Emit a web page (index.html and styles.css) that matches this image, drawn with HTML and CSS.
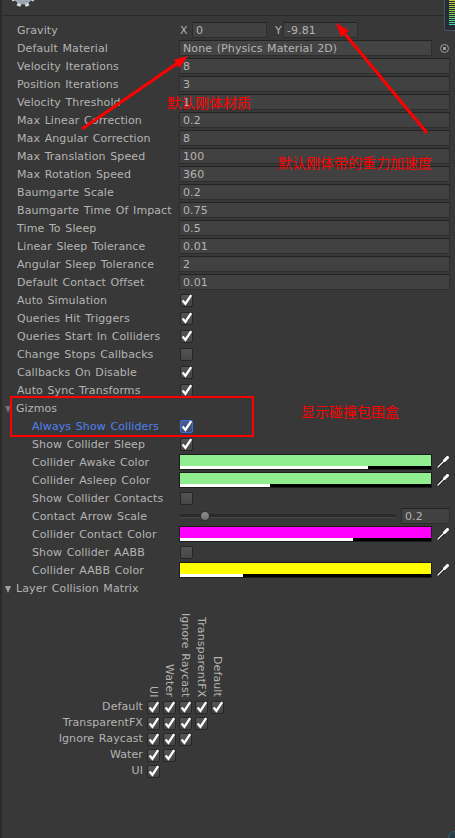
FILE: index.html
```html
<!DOCTYPE html>
<html>
<head>
<meta charset="utf-8">
<title>Physics 2D Settings</title>
<link rel="stylesheet" href="styles.css">
</head>
<body>
<div class="page">
  <div class="header">
    <svg class="gear" width="24" height="7" viewBox="0 17 24 7">
      <defs>
        <linearGradient id="gg" x1="0" y1="0" x2="0" y2="1">
          <stop offset="0" stop-color="#f4f6f9"/>
          <stop offset="1" stop-color="#8a94a4"/>
        </linearGradient>
      </defs>
      <g fill="url(#gg)">
        <circle cx="12" cy="12" r="9.5"/>
        <rect x="10" y="0" width="4" height="5" transform="rotate(22.5 12 12)"/>
        <rect x="10" y="0" width="4" height="5" transform="rotate(67.5 12 12)"/>
        <rect x="10" y="0" width="4" height="5" transform="rotate(112.5 12 12)"/>
        <rect x="10" y="0" width="4" height="5" transform="rotate(157.5 12 12)"/>
        <rect x="10" y="0" width="4" height="5" transform="rotate(202.5 12 12)"/>
        <rect x="10" y="0" width="4" height="5" transform="rotate(247.5 12 12)"/>
        <rect x="10" y="0" width="4" height="5" transform="rotate(292.5 12 12)"/>
        <rect x="10" y="0" width="4" height="5" transform="rotate(337.5 12 12)"/>
      </g>
    </svg>
  </div>
  <div class="meter"></div>
  <div class="corner"></div>

  <div class="props">
    <div class="row"><span class="label">Gravity</span>
      <div class="val"><span class="axis">X</span><span class="field w75">0</span><span class="axis ay">Y</span><span class="field w75">-9.81</span></div></div>
    <div class="row"><span class="label">Default Material</span>
      <div class="val"><span class="field obj">None (Physics Material 2D)</span><span class="picker"></span></div></div>
    <div class="row"><span class="label">Velocity Iterations</span><div class="val"><span class="field">8</span></div></div>
    <div class="row"><span class="label">Position Iterations</span><div class="val"><span class="field">3</span></div></div>
    <div class="row"><span class="label">Velocity Threshold</span><div class="val"><span class="field">1</span></div></div>
    <div class="row"><span class="label">Max Linear Correction</span><div class="val"><span class="field">0.2</span></div></div>
    <div class="row"><span class="label">Max Angular Correction</span><div class="val"><span class="field">8</span></div></div>
    <div class="row"><span class="label">Max Translation Speed</span><div class="val"><span class="field">100</span></div></div>
    <div class="row"><span class="label">Max Rotation Speed</span><div class="val"><span class="field">360</span></div></div>
    <div class="row"><span class="label">Baumgarte Scale</span><div class="val"><span class="field">0.2</span></div></div>
    <div class="row"><span class="label">Baumgarte Time Of Impact</span><div class="val"><span class="field">0.75</span></div></div>
    <div class="row"><span class="label">Time To Sleep</span><div class="val"><span class="field">0.5</span></div></div>
    <div class="row"><span class="label">Linear Sleep Tolerance</span><div class="val"><span class="field">0.01</span></div></div>
    <div class="row"><span class="label">Angular Sleep Tolerance</span><div class="val"><span class="field">2</span></div></div>
    <div class="row"><span class="label">Default Contact Offset</span><div class="val"><span class="field">0.01</span></div></div>

    <div class="row"><span class="label">Auto Simulation</span><div class="val"><span class="cb"><svg viewBox="0 0 13 13"><path d="M2.6 6.6 L5.4 9.8 L11.2 1.2"/></svg></span></div></div>
    <div class="row"><span class="label">Queries Hit Triggers</span><div class="val"><span class="cb"><svg viewBox="0 0 13 13"><path d="M2.6 6.6 L5.4 9.8 L11.2 1.2"/></svg></span></div></div>
    <div class="row"><span class="label">Queries Start In Colliders</span><div class="val"><span class="cb"><svg viewBox="0 0 13 13"><path d="M2.6 6.6 L5.4 9.8 L11.2 1.2"/></svg></span></div></div>
    <div class="row"><span class="label">Change Stops Callbacks</span><div class="val"><span class="cb"></span></div></div>
    <div class="row"><span class="label">Callbacks On Disable</span><div class="val"><span class="cb"><svg viewBox="0 0 13 13"><path d="M2.6 6.6 L5.4 9.8 L11.2 1.2"/></svg></span></div></div>
    <div class="row"><span class="label">Auto Sync Transforms</span><div class="val"><span class="cb"><svg viewBox="0 0 13 13"><path d="M2.6 6.6 L5.4 9.8 L11.2 1.2"/></svg></span></div></div>

    <div class="row"><span class="label fold"><i class="tri dim"></i>Gizmos</span></div>
    <div class="row"><span class="label in focus">Always Show Colliders</span><div class="val"><span class="cb cbf"><svg viewBox="0 0 13 13"><path d="M2.6 6.6 L5.4 9.8 L11.2 1.2"/></svg></span></div></div>
    <div class="row"><span class="label in">Show Collider Sleep</span><div class="val"><span class="cb"><svg viewBox="0 0 13 13"><path d="M2.6 6.6 L5.4 9.8 L11.2 1.2"/></svg></span></div></div>
    <div class="row"><span class="label in">Collider Awake Color</span>
      <div class="val"><span class="color"><span class="fill green"></span><span class="alpha"><i style="width:75%"></i></span></span>
        <svg class="dropper" viewBox="0 0 12 12"><path class="dr-o" d="M1 11 L8 4"/><path class="dr-i" d="M1 11 L8 4"/><path class="dr-h" d="M7.5 4.5 L10.5 1.5"/></svg></div></div>
    <div class="row"><span class="label in">Collider Asleep Color</span>
      <div class="val"><span class="color"><span class="fill green"></span><span class="alpha"><i style="width:36%"></i></span></span>
        <svg class="dropper" viewBox="0 0 12 12"><path class="dr-o" d="M1 11 L8 4"/><path class="dr-i" d="M1 11 L8 4"/><path class="dr-h" d="M7.5 4.5 L10.5 1.5"/></svg></div></div>
    <div class="row"><span class="label in">Show Collider Contacts</span><div class="val"><span class="cb"></span></div></div>
    <div class="row"><span class="label in">Contact Arrow Scale</span>
      <div class="val"><span class="slider"><span class="track"></span><span class="thumb"></span></span><span class="field num">0.2</span></div></div>
    <div class="row"><span class="label in">Collider Contact Color</span>
      <div class="val"><span class="color"><span class="fill magenta"></span><span class="alpha"><i style="width:69%"></i></span></span>
        <svg class="dropper" viewBox="0 0 12 12"><path class="dr-o" d="M1 11 L8 4"/><path class="dr-i" d="M1 11 L8 4"/><path class="dr-h" d="M7.5 4.5 L10.5 1.5"/></svg></div></div>
    <div class="row"><span class="label in">Show Collider AABB</span><div class="val"><span class="cb"></span></div></div>
    <div class="row"><span class="label in">Collider AABB Color</span>
      <div class="val"><span class="color"><span class="fill yellow"></span><span class="alpha"><i style="width:25%"></i></span></span>
        <svg class="dropper" viewBox="0 0 12 12"><path class="dr-o" d="M1 11 L8 4"/><path class="dr-i" d="M1 11 L8 4"/><path class="dr-h" d="M7.5 4.5 L10.5 1.5"/></svg></div></div>

    <div class="row"><span class="label fold"><i class="tri"></i>Layer Collision Matrix</span></div>

    <div class="matrix">
      <div class="mhead">
        <span class="mspacer"></span>
        <span class="mcol"><span class="vt">UI</span></span>
        <span class="mcol"><span class="vt">Water</span></span>
        <span class="mcol"><span class="vt">Ignore Raycast</span></span>
        <span class="mcol"><span class="vt">TransparentFX</span></span>
        <span class="mcol"><span class="vt">Default</span></span>
      </div>
      <div class="mrow"><span class="mlabel">Default</span>
        <span class="cb"><svg viewBox="0 0 13 13"><path d="M2.6 6.6 L5.4 9.8 L11.2 1.2"/></svg></span>
        <span class="cb"><svg viewBox="0 0 13 13"><path d="M2.6 6.6 L5.4 9.8 L11.2 1.2"/></svg></span>
        <span class="cb"><svg viewBox="0 0 13 13"><path d="M2.6 6.6 L5.4 9.8 L11.2 1.2"/></svg></span>
        <span class="cb"><svg viewBox="0 0 13 13"><path d="M2.6 6.6 L5.4 9.8 L11.2 1.2"/></svg></span>
        <span class="cb"><svg viewBox="0 0 13 13"><path d="M2.6 6.6 L5.4 9.8 L11.2 1.2"/></svg></span>
      </div>
      <div class="mrow"><span class="mlabel">TransparentFX</span>
        <span class="cb"><svg viewBox="0 0 13 13"><path d="M2.6 6.6 L5.4 9.8 L11.2 1.2"/></svg></span>
        <span class="cb"><svg viewBox="0 0 13 13"><path d="M2.6 6.6 L5.4 9.8 L11.2 1.2"/></svg></span>
        <span class="cb"><svg viewBox="0 0 13 13"><path d="M2.6 6.6 L5.4 9.8 L11.2 1.2"/></svg></span>
        <span class="cb"><svg viewBox="0 0 13 13"><path d="M2.6 6.6 L5.4 9.8 L11.2 1.2"/></svg></span>
      </div>
      <div class="mrow"><span class="mlabel">Ignore Raycast</span>
        <span class="cb"><svg viewBox="0 0 13 13"><path d="M2.6 6.6 L5.4 9.8 L11.2 1.2"/></svg></span>
        <span class="cb"><svg viewBox="0 0 13 13"><path d="M2.6 6.6 L5.4 9.8 L11.2 1.2"/></svg></span>
        <span class="cb"><svg viewBox="0 0 13 13"><path d="M2.6 6.6 L5.4 9.8 L11.2 1.2"/></svg></span>
      </div>
      <div class="mrow"><span class="mlabel">Water</span>
        <span class="cb"><svg viewBox="0 0 13 13"><path d="M2.6 6.6 L5.4 9.8 L11.2 1.2"/></svg></span>
        <span class="cb"><svg viewBox="0 0 13 13"><path d="M2.6 6.6 L5.4 9.8 L11.2 1.2"/></svg></span>
      </div>
      <div class="mrow"><span class="mlabel">UI</span>
        <span class="cb"><svg viewBox="0 0 13 13"><path d="M2.6 6.6 L5.4 9.8 L11.2 1.2"/></svg></span>
      </div>
    </div>
  </div>

  <svg class="annot" width="455" height="838" viewBox="0 0 455 838">
    <line x1="82" y1="129" x2="177" y2="63.5"/>
    <polygon points="188,56 179.3,68 173.7,59.8"/>
    <line x1="427" y1="133" x2="345" y2="34"/>
    <polygon points="336,23 348.8,30.6 341,37"/>
    <rect x="11" y="397" width="242" height="39"/>
  </svg>
  <span class="note n1">默认刚体材质</span>
  <span class="note n2">默认刚体带的重力加速度</span>
  <span class="note n3">显示碰撞包围盒</span>
</div>
</body>
</html>
```

FILE: styles.css
```css
html, body {
  margin: 0;
  padding: 0;
  background: #383838;
}

body {
  width: 455px;
  height: 838px;
  overflow: hidden;
  font-family: "DejaVu Sans", Verdana, sans-serif;
  font-size: 11px;
  color: #b4b4b4;
  letter-spacing: 0.1px;
  word-spacing: 1px;
}

.page {
  position: relative;
  height: 838px;
  box-sizing: border-box;
  border-left: 2px solid #2b2b2b;
}

.header {
  height: 15px;
  border-bottom: 1px solid #2a2a2a;
  display: flex;
  align-items: flex-start;
  padding-left: 9px;
}

.gear {
  display: block;
}

.meter {
  position: absolute;
  top: 0;
  right: 0;
  width: 10px;
  height: 30px;
  background: #262a33;
  border-left: 1px solid #4c5262;
  border-bottom: 1px solid #4c5262;
  border-bottom-left-radius: 3px;
}

.meter::before {
  content: "";
  position: absolute;
  left: 4px;
  right: 0;
  top: 0;
  height: 25px;
  background:
    repeating-linear-gradient(to bottom, transparent 0 1px, #262a33 1px 2px),
    linear-gradient(to bottom, #c9c93e, #8fd045 45%, #3fd0a8);
}

.corner {
  position: absolute;
  right: -7px;
  bottom: -7px;
  width: 12px;
  height: 12px;
  border-radius: 50%;
  border: 1px solid #2f5f7a;
  background: #2c3a44;
}

.props {
  display: flex;
  flex-direction: column;
  padding: 5px 5px 0 15px;
}

.row {
  display: flex;
  align-items: center;
  height: 18px;
}

.label {
  flex: none;
  width: 162px;
  height: 18px;
  box-sizing: border-box;
  padding-top: 2px;
  line-height: 16px;
  white-space: nowrap;
}

.label.in {
  padding-left: 15px;
}

.label.focus {
  color: #4f80f2;
}

.label.fold {
  display: flex;
  align-items: center;
  margin-left: -12px;
  width: 174px;
}

.tri {
  width: 0;
  height: 0;
  border-left: 3.5px solid transparent;
  border-right: 3.5px solid transparent;
  border-top: 7px solid #a0a0a0;
  margin-right: 5px;
}

.tri.dim {
  border-top-color: #727272;
}

.val {
  flex: 1;
  display: flex;
  align-items: center;
  height: 18px;
}

.field {
  flex: 1;
  height: 16px;
  box-sizing: border-box;
  background: #414141;
  border: 1px solid #2d2d2d;
  border-top-color: #232323;
  padding: 1px 3px 0;
  line-height: 13px;
  white-space: nowrap;
  overflow: hidden;
}

.axis {
  flex: none;
  width: 13px;
  padding: 1px 0 0 1px;
  box-sizing: border-box;
  line-height: 15px;
}

.axis.ay {
  width: 16px;
  padding-left: 8px;
}

.field.w75 {
  flex: none;
  width: 75px;
}

.field.obj {
  flex: none;
  width: 253px;
  background: #444444;
}

.picker {
  flex: none;
  width: 9px;
  height: 9px;
  margin-left: 8px;
  box-sizing: border-box;
  border: 1.3px solid #9c9c9c;
  border-radius: 50%;
  background: radial-gradient(circle, #9c9c9c 0 1.4px, transparent 1.8px);
}

.cb {
  flex: none;
  width: 13px;
  height: 13px;
  box-sizing: border-box;
  margin-left: 1px;
  border: 1px solid #262626;
  border-radius: 2px;
  background: linear-gradient(#545454, #464646);
}

.cb svg {
  display: block;
  width: 13px;
  height: 13px;
  margin: -1px;
  overflow: visible;
}

.cb svg path {
  fill: none;
  stroke: #ffffff;
  stroke-width: 2.3;
  stroke-linejoin: miter;
}

.cb.cbf {
  border-color: #3b6be0;
  background: linear-gradient(#4b5c8c, #3c4b78);
}

.color {
  flex: none;
  width: 253px;
  height: 16px;
  box-sizing: border-box;
  border: 1px solid #1c1c1c;
  display: flex;
  flex-direction: column;
}

.fill {
  flex: 1;
}

.fill.green {
  background: #90ee90;
}

.fill.magenta {
  background: #ff00ff;
}

.fill.yellow {
  background: #ffff00;
}

.alpha {
  height: 3px;
  background: #000000;
}

.alpha i {
  display: block;
  height: 100%;
  background: #ffffff;
}

.dropper {
  flex: none;
  width: 12px;
  height: 12px;
  margin-left: 5px;
}

.dr-o {
  stroke: #1a1a1a;
  stroke-width: 3;
  stroke-linecap: round;
}

.dr-i {
  stroke: #ffffff;
  stroke-width: 1.3;
  stroke-linecap: round;
}

.dr-h {
  stroke: #ffffff;
  stroke-width: 3;
  stroke-linecap: round;
}

.slider {
  flex: none;
  position: relative;
  width: 217px;
  height: 16px;
  display: flex;
  align-items: center;
}

.track {
  flex: 1;
  height: 3px;
  border-radius: 2px;
  background: #2a2a2a;
  border-bottom: 1px solid #464646;
}

.thumb {
  position: absolute;
  left: 21px;
  top: 3px;
  width: 10px;
  height: 10px;
  box-sizing: border-box;
  border-radius: 50%;
  border: 1px solid #2c2c2c;
  background: linear-gradient(#8e8e8e, #6e6e6e);
}

.field.num {
  flex: none;
  width: 49px;
  margin-left: 5px;
}

.matrix {
  display: flex;
  flex-direction: column;
}

.mhead {
  display: flex;
  height: 102px;
  padding-bottom: 2px;
  box-sizing: border-box;
}

.mspacer {
  flex: none;
  width: 130px;
}

.mcol {
  flex: none;
  width: 13px;
  margin-right: 3px;
  display: flex;
  flex-direction: column;
  justify-content: flex-end;
}

.vt {
  writing-mode: vertical-rl;
  line-height: 13px;
  white-space: nowrap;
}

.mrow {
  display: flex;
  align-items: center;
  height: 16px;
  gap: 3px;
}

.mlabel {
  flex: none;
  width: 126px;
  margin-right: 1px;
  text-align: right;
  line-height: 16px;
  white-space: nowrap;
}

.mrow .cb {
  margin-left: 0;
}

.annot {
  position: absolute;
  left: -2px;
  top: 0;
  pointer-events: none;
}

.annot line {
  stroke: #ff0000;
  stroke-width: 3;
}

.annot polygon {
  fill: #ff0000;
}

.annot rect {
  fill: none;
  stroke: #ff0000;
  stroke-width: 2;
}

.note {
  position: absolute;
  color: #ff0000;
  font-family: "Noto Sans CJK SC", sans-serif;
  font-size: 14px;
  line-height: 14px;
  letter-spacing: 0;
  word-spacing: 0;
  white-space: nowrap;
}

.n1 {
  left: 165px;
  top: 95px;
}

.n2 {
  left: 276px;
  top: 155px;
}

.n3 {
  left: 299px;
  top: 404px;
}
```
